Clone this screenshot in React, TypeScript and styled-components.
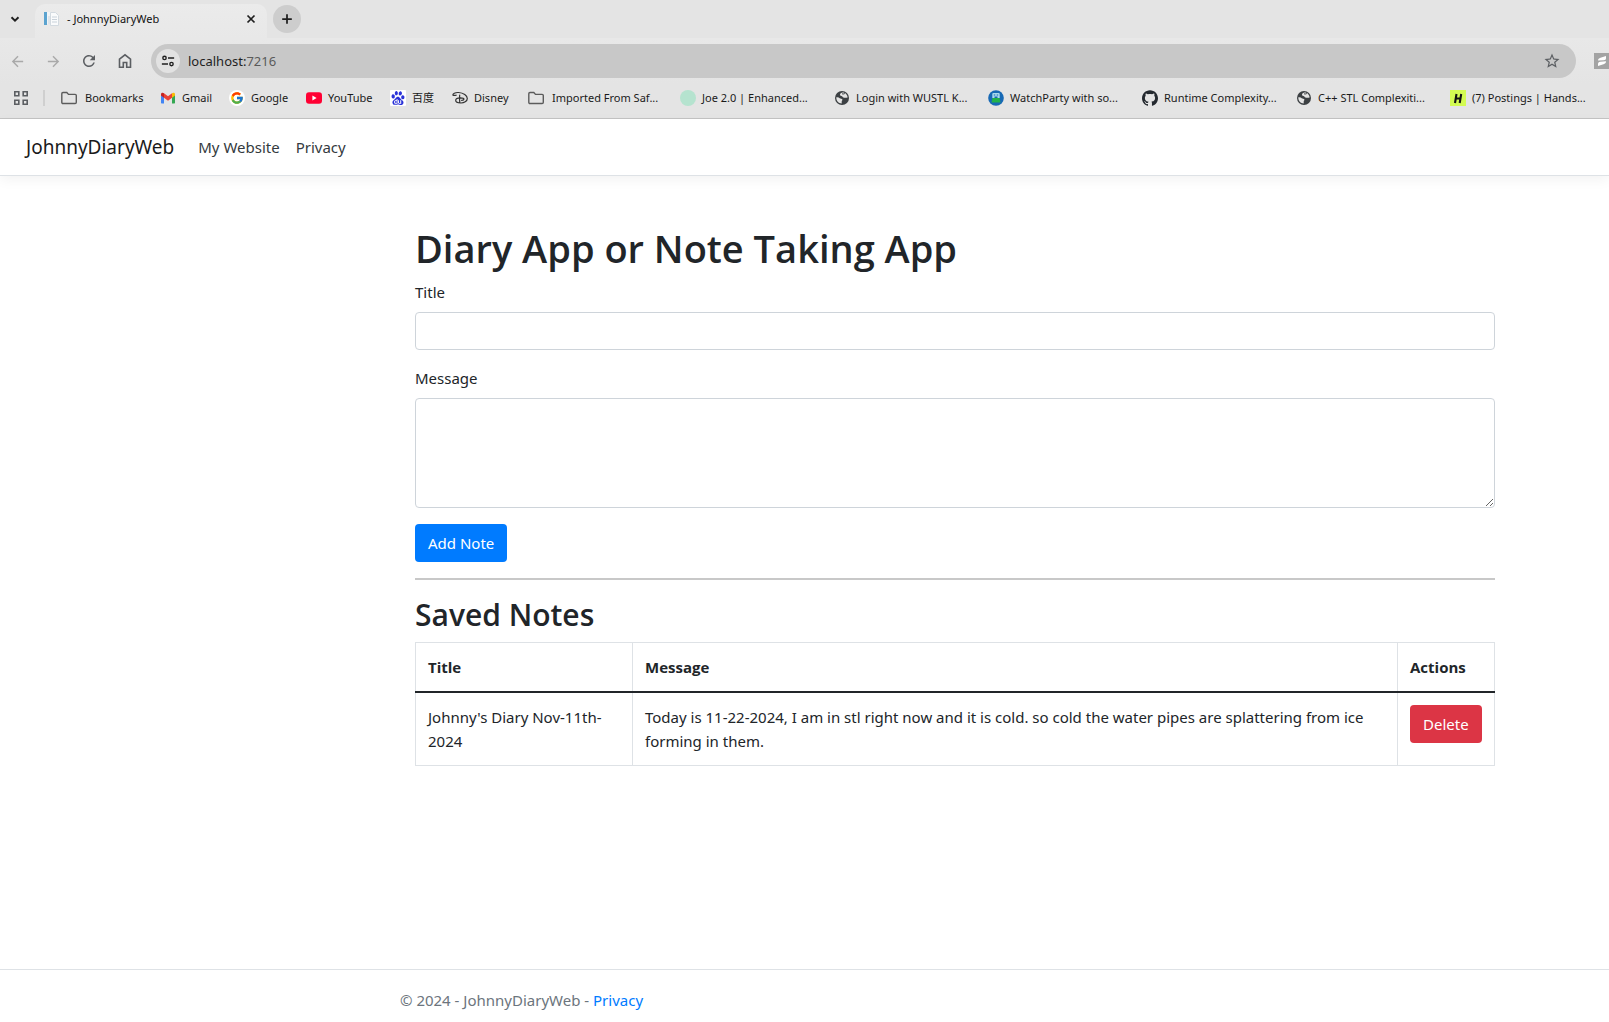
import React, { useState } from "react";
import styled, { createGlobalStyle } from "styled-components";
import { FcGoogle } from "react-icons/fc";
import { SiBaidu, SiGithub } from "react-icons/si";
import { MdArrowBack, MdArrowForward, MdRefresh, MdStarOutline } from "react-icons/md";

const GlobalStyle = createGlobalStyle`
  *, *::before, *::after { box-sizing: border-box; }
  body {
    margin: 0;
    background: #fff;
    color: #212529;
    font-family: "Noto Sans", "Open Sans", "Noto Sans CJK SC", sans-serif;
    font-size: 15px;
    line-height: 24px;
  }
  button, input, textarea { font: inherit; }
`;

const Page = styled.div`
  display: flex;
  flex-direction: column;
  min-height: 100vh;
`;

const Chrome = styled.div`
  display: flex;
  flex-direction: column;
  overflow: hidden;
  background: #e4e4e4;
  border-bottom: 1px solid #c4c4c4;
  color: #1f1f1f;
  font-size: 12px;
  line-height: 16px;
`;

const TabStrip = styled.div`
  display: flex;
  align-items: center;
  height: 38px;
`;

const IconButton = styled.button<{ $size: number; $fill?: string; $color?: string; $round?: boolean }>`
  display: flex;
  align-items: center;
  justify-content: center;
  flex: none;
  width: ${(p) => p.$size}px;
  height: ${(p) => p.$size}px;
  padding: 0;
  border: 0;
  border-radius: ${(p) => (p.$round ? "50%" : "8px")};
  background: ${(p) => p.$fill ?? "transparent"};
  color: ${(p) => p.$color ?? "#1f1f1f"};
`;

const Tab = styled.div`
  display: flex;
  align-items: center;
  align-self: flex-end;
  gap: 8px;
  width: 232px;
  height: 34px;
  margin: 0 6px 0 5px;
  padding: 0 6px 4px 8px;
  border-radius: 10px 10px 0 0;
  background: linear-gradient(#ebebeb, #e8e8e8);
`;

const TabTitle = styled.span`
  flex: 1;
  font-size: 11px;
  color: #111;
`;

const Toolbar = styled.div`
  display: flex;
  align-items: center;
  height: 46px;
  padding-left: 1px;
  background: linear-gradient(#e8e8e8, #e4e4e4);
`;

const ToolButtons = styled.div`
  display: flex;
  gap: 4px;
  margin-right: 10px;
`;

const AddressBar = styled.form`
  display: flex;
  flex: 1;
  align-items: center;
  gap: 8px;
  height: 34px;
  padding: 0 12px 0 5px;
  border-radius: 17px;
  background: #c8c8c8;
`;

const AddressText = styled.div`
  flex: 1;
  font-size: 13px;
  color: #1f1f1f;
`;

const Port = styled.span`
  color: #5a5a5a;
`;

const Extension = styled.div`
  width: 15px;
  height: 16px;
  margin-left: 18px;
  overflow: hidden;
`;

const BookmarkBar = styled.nav`
  display: flex;
  align-items: center;
  height: 34px;
  padding-bottom: 6px;
`;

const AppsButton = styled(IconButton)`
  margin: 0 14px 0 13px;
`;

const Divider = styled.span`
  flex: none;
  width: 2px;
  height: 16px;
  margin-right: 16px;
  background: #cfcfcf;
`;

const Bookmark = styled.a<{ $span: number; $gap?: number }>`
  display: flex;
  flex: none;
  align-items: center;
  gap: ${(p) => p.$gap ?? 6}px;
  width: ${(p) => p.$span}px;
  color: #1a1a1a;
  font-size: 11px;
  text-decoration: none;
  white-space: nowrap;
  svg { flex: none; }
`;

const SiteHeader = styled.header`
  display: flex;
  align-items: center;
  gap: 24px;
  height: 57px;
  padding: 0 26px;
  border-bottom: 1px solid #dee2e6;
  box-shadow: 0 4px 12px rgba(0, 0, 0, 0.05);
`;

const Brand = styled.a`
  color: #1a1a1a;
  font-size: 19px;
  line-height: 30px;
  text-decoration: none;
`;

const NavLinks = styled.nav`
  display: flex;
  gap: 16px;
`;

const NavLink = styled.a`
  color: #343a40;
  text-decoration: none;
`;

const Main = styled.main`
  flex: 1;
  width: 100%;
  max-width: 1525px;
  padding: 48px 30px 0 415px;
`;

const Heading = styled.h1`
  margin: 0 0 8px;
  font-family: "Open Sans", "Noto Sans", sans-serif;
  font-size: 38px;
  line-height: 48px;
  font-weight: 600;
`;

const SubHeading = styled.h2`
  margin: 0 0 8px;
  font-family: "Open Sans", "Noto Sans", sans-serif;
  font-size: 30px;
  line-height: 38px;
  font-weight: 600;
`;

const Field = styled.div`
  display: flex;
  flex-direction: column;
  gap: 8px;
  margin-bottom: 16px;
`;

const TextInput = styled.input`
  height: 38px;
  padding: 6px 12px;
  border: 1px solid #ced4da;
  border-radius: 4px;
  background: #fff;
  color: #495057;
`;

const TextArea = styled.textarea`
  height: 110px;
  padding: 6px 12px;
  border: 1px solid #ced4da;
  border-radius: 4px;
  background: #fff;
  color: #495057;
  resize: vertical;
`;

const Button = styled.button<{ $tone: string }>`
  display: block;
  height: 38px;
  padding: 0 13px;
  border: 0;
  border-radius: 4px;
  background: ${(p) => p.$tone};
  color: #fff;
`;

const Rule = styled.hr`
  height: 2px;
  margin: 16px 0;
  border: 0;
  background: #c8c8c8;
`;

const NotesTable = styled.table`
  width: 100%;
  border-collapse: collapse;
  border: 1px solid #dee2e6;
`;

const HeadCell = styled.th<{ $width?: string }>`
  width: ${(p) => p.$width ?? "auto"};
  padding: 12px;
  border: 1px solid #dee2e6;
  border-bottom: 2px solid #212529;
  font-family: "Open Sans", "Noto Sans", sans-serif;
  font-weight: 700;
  text-align: left;
`;

const Cell = styled.td`
  padding: 12px;
  border: 1px solid #dee2e6;
  vertical-align: top;
`;

const Footer = styled.footer`
  height: 53px;
  padding: 18px 30px 0 400px;
  border-top: 1px solid #dee2e6;
  color: #6c757d;
`;

const FooterLink = styled.a`
  color: #007bff;
  text-decoration: none;
`;

const Svg = ({ size = 16, children }: { size?: number; children: React.ReactNode }) => (
  <svg width={size} height={size} viewBox="0 0 16 16" fill="none" aria-hidden="true">
    {children}
  </svg>
);

const FolderIcon = () => (
  <Svg>
    <path d="M.8 3.8q0-1.3 1.2-1.3h3.8l1.7 1.900h6.600q1.200 0 1.200 1.200v6.700q0 1.200-1.200 1.200H2q-1.200 0-1.200-1.200z" stroke="#5b5b5b" strokeWidth="1.4" />
  </Svg>
);

const GlobeIcon = () => (
  <Svg>
    <circle cx="8" cy="8" r="7" fill="#3c4043" />
    <path d="M2.300 7.300c1.700-.3 2.700.1 3.400.9.700.8 2.400.1 2.700 1.300.2.900-.7 1.200-.7 2.200v1.900C4.600 13.400 2.100 10.800 2.300 7.300z" fill="#e4e4e4" />
    <path d="M8.500 2.600c-1.200.2-2.700 1-2.500 2.400.1 1 1.300.9 2 1.300.8.500 1.100 1.600 2.200 1.500 1-.1 1.900.2 3.400-.4-.2-2.600-2.300-4.900-5.100-4.800z" fill="#e4e4e4" />
    <path d="M8 3.800c1.300.3 2.300.2 3-.6M9 8.200c1 .6 1.500 1.200 1.300 2.400" stroke="#3c4043" strokeWidth="1" />
  </Svg>
);

const GmailIcon = () => (
  <Svg>
    <path d="M1 4.500v8.300q0 .7.700.7H4V7z" fill="#4285f4" />
    <path d="M12 7v6.500h2.300q.7 0 .7-.7V4.500z" fill="#34a853" />
    <path d="M4 3.300v4.400l4 3 4-3V3.300l-4 3z" fill="#ea4335" />
    <path d="M1 4.200v1.300l3 2.200V3.300C2.700 2.200 1 2.800 1 4.200z" fill="#c5221f" />
    <path d="M15 4.200v1.300l-3 2.200V3.300c1.300-1.100 3-.5 3 .9z" fill="#fbbc04" />
  </Svg>
);

const GoogleIcon = () => (
  <Svg>
    <circle cx="8" cy="8" r="8" fill="#fff" />
    <FcGoogle x={1} y={1} size={14} />
  </Svg>
);

const YouTubeIcon = () => (
  <Svg>
    <rect y="2.300" width="16" height="11.400" rx="3" fill="#ff0033" />
    <path d="M6.400 5.500v5l4.200-2.500z" fill="#fff" />
  </Svg>
);

const BaiduIcon = () => (
  <Svg>
    <rect width="16" height="16" rx="1" fill="#fff" />
    <SiBaidu x={1} y={1} size={14} color="#2a32d8" />
  </Svg>
);

const DisneyIcon = () => (
  <Svg>
    <path d="M1 5.200C.4 3.600 3.200 2.300 6.500 2.500c5 .3 8.800 3 8.800 5.900 0 2.900-3.300 4.700-6.600 4.600-2.700-.1-5-1.300-5-2.800 0-1.500 2.400-2.300 4.800-2.400 2 0 3.400.4 3.400 1.200 0 .9-1.100 1.300-2.300 1.300M7.700 5c-.2 2.200-.2 5 .1 7.400M1 5.200c1 .4 2.200.3 3.200 0" stroke="#333" strokeWidth="1.200" strokeLinecap="round" />
  </Svg>
);

const MintIcon = () => (
  <Svg>
    <circle cx="8" cy="8" r="8" fill="#b5e3cf" />
  </Svg>
);

const WatchPartyIcon = () => (
  <Svg>
    <circle cx="8" cy="8" r="7.800" fill="#1769b5" />
    <path d="M4.300 4q0-1 1-1h5.400q1 0 1 1v4H4.300z" fill="#a9d9ec" />
    <path d="M5.800 4.500h1.500v1H5.800zM8.700 4.500h1.500v1H8.700zM6.500 6.500h3v1.500h-3z" fill="#1769b5" />
    <path d="M4.500 8h7l1 4.500h-9z" fill="#21b24b" />
  </Svg>
);

const HandshakeIcon = () => (
  <Svg>
    <rect width="16" height="16" fill="#d3fb52" />
    <path d="M6.500 4 5 13M11.200 4 9.700 13M6 8.500h4.500" stroke="#121212" strokeWidth="2.100" />
  </Svg>
);

const bookmarks = [
  { label: "Bookmarks", icon: <FolderIcon />, span: 99, gap: 8 },
  { label: "Gmail", icon: <GmailIcon />, span: 69 },
  { label: "Google", icon: <GoogleIcon />, span: 77 },
  { label: "YouTube", icon: <YouTubeIcon />, span: 84 },
  { label: "百度", icon: <BaiduIcon />, span: 62 },
  { label: "Disney", icon: <DisneyIcon />, span: 76 },
  { label: "Imported From Saf...", icon: <FolderIcon />, span: 152, gap: 8 },
  { label: "Joe 2.0 | Enhanced...", icon: <MintIcon />, span: 154 },
  { label: "Login with WUSTL K...", icon: <GlobeIcon />, span: 154 },
  { label: "WatchParty with so...", icon: <WatchPartyIcon />, span: 154 },
  { label: "Runtime Complexity...", icon: <SiGithub size={16} color="#24292f" />, span: 154 },
  { label: "C++ STL Complexiti...", icon: <GlobeIcon />, span: 154 },
  { label: "(7) Postings | Hands...", icon: <HandshakeIcon />, span: 154 },
];

const BrowserChrome = () => (
  <Chrome>
    <TabStrip>
      <IconButton $size={30} aria-label="Search tabs">
        <Svg size={14}>
          <path d="m4 6 4 4 4-4" stroke="currentColor" strokeWidth="2.200" />
        </Svg>
      </IconButton>
      <Tab>
        <Svg>
          <path d="M1 1h3v13H1z" fill="#5ba3cf" />
          <path d="M4 1h8v12H4z" fill="#f1f4f6" />
          <path d="M5 5h4v8H5z" fill="#dfe5ea" />
          <path d="M7.500 1.500h5l3 3v10h-8z" fill="#fafbfc" stroke="#d3dae0" />
          <path d="M9 6h5M9 8.500h5M9 11h5" stroke="#c9d2da" />
        </Svg>
        <TabTitle>- JohnnyDiaryWeb</TabTitle>
        <IconButton $size={20} aria-label="Close tab">
          <Svg size={14}>
            <path d="m4 4 8 8M12 4l-8 8" stroke="currentColor" strokeWidth="2" />
          </Svg>
        </IconButton>
      </Tab>
      <IconButton $size={28} $fill="#cdcdcd" $round aria-label="New tab">
        <Svg size={14}>
          <path d="M8 2.500v11M2.500 8h11" stroke="currentColor" strokeWidth="2" />
        </Svg>
      </IconButton>
    </TabStrip>
    <Toolbar>
      <ToolButtons>
        <IconButton $size={32} $color="#a9a9a9" aria-label="Back"><MdArrowBack size={17} /></IconButton>
        <IconButton $size={32} $color="#a9a9a9" aria-label="Forward"><MdArrowForward size={17} /></IconButton>
        <IconButton $size={32} $color="#5b5e62" aria-label="Reload"><MdRefresh size={18} /></IconButton>
        <IconButton $size={32} $color="#5b5e62" aria-label="Home">
          <Svg size={16}>
            <path d="M2.500 6.200 8 1.800l5.500 4.400v8h-3.800V9.500H6.300v4.700H2.500z" stroke="currentColor" strokeWidth="1.600" />
          </Svg>
        </IconButton>
      </ToolButtons>
      <AddressBar>
        <IconButton type="button" $size={24} $fill="#e2e2e2" $round aria-label="Site information">
          <Svg size={14}>
            <circle cx="4" cy="4.500" r="1.900" stroke="currentColor" strokeWidth="1.600" />
            <path d="M8 4.500h7M1 11.500h7" stroke="currentColor" strokeWidth="1.600" />
            <circle cx="12" cy="11.500" r="1.900" stroke="currentColor" strokeWidth="1.600" />
          </Svg>
        </IconButton>
        <AddressText>localhost:<Port>7216</Port></AddressText>
        <IconButton type="button" $size={24} $color="#5b5e62" aria-label="Bookmark this page">
          <MdStarOutline size={18} />
        </IconButton>
      </AddressBar>
      <Extension>
        <Svg>
          <path d="M0 0h16v16H0z" fill="#a3a3a3" />
          <path d="M4 7.500c0-1.500 1-2.300 2.500-2.800L12 3v2.200c0 1.200-.8 1.800-2 2.100zM12 8.300c0 1.700-1 2.600-2.500 3L4 13v-2c0-1.200.8-1.900 2-2.200z" fill="#fff" />
        </Svg>
      </Extension>
    </Toolbar>
    <BookmarkBar>
      <AppsButton $size={16} $color="#5b5e62" aria-label="Apps">
        <Svg>
          <path d="M1.800 1.800h4v4h-4zM10.200 1.800h4v4h-4zM1.800 10.200h4v4h-4zM10.200 10.200h4v4h-4z" stroke="currentColor" strokeWidth="1.600" />
        </Svg>
      </AppsButton>
      <Divider />
      {bookmarks.map((b) => (
        <Bookmark key={b.label} href="#" $span={b.span} $gap={b.gap}>
          {b.icon}
          <span>{b.label}</span>
        </Bookmark>
      ))}
    </BookmarkBar>
  </Chrome>
);

const initialNotes = [
  {
    id: 1,
    title: "Johnny's Diary Nov-11th-2024",
    message:
      "Today is 11-22-2024, I am in stl right now and it is cold. so cold the water pipes are splattering from ice forming in them.",
  },
];

export default function App() {
  const [notes, setNotes] = useState(initialNotes);
  const [title, setTitle] = useState("");
  const [message, setMessage] = useState("");

  const addNote = (event: React.FormEvent) => {
    event.preventDefault();
    if (!title && !message) return;
    setNotes([...notes, { id: Date.now(), title, message }]);
    setTitle("");
    setMessage("");
  };

  return (
    <Page>
      <GlobalStyle />
      <BrowserChrome />
      <SiteHeader>
        <Brand href="#">JohnnyDiaryWeb</Brand>
        <NavLinks>
          <NavLink href="#">My Website</NavLink>
          <NavLink href="#">Privacy</NavLink>
        </NavLinks>
      </SiteHeader>
      <Main>
        <Heading>Diary App or Note Taking App</Heading>
        <form onSubmit={addNote}>
          <Field>
            <label htmlFor="title">Title</label>
            <TextInput id="title" value={title} onChange={(e) => setTitle(e.target.value)} />
          </Field>
          <Field>
            <label htmlFor="message">Message</label>
            <TextArea id="message" value={message} onChange={(e) => setMessage(e.target.value)} />
          </Field>
          <Button $tone="#007bff" type="submit">Add Note</Button>
        </form>
        <Rule />
        <SubHeading>Saved Notes</SubHeading>
        <NotesTable>
          <thead>
            <tr>
              <HeadCell $width="217px">Title</HeadCell>
              <HeadCell>Message</HeadCell>
              <HeadCell $width="97px">Actions</HeadCell>
            </tr>
          </thead>
          <tbody>
            {notes.map((note) => (
              <tr key={note.id}>
                <Cell>{note.title}</Cell>
                <Cell>{note.message}</Cell>
                <Cell>
                  <Button $tone="#dc3545" type="button" onClick={() => setNotes(notes.filter((n) => n.id !== note.id))}>
                    Delete
                  </Button>
                </Cell>
              </tr>
            ))}
          </tbody>
        </NotesTable>
      </Main>
      <Footer>
        © 2024 - JohnnyDiaryWeb - <FooterLink href="#">Privacy</FooterLink>
      </Footer>
    </Page>
  );
}
